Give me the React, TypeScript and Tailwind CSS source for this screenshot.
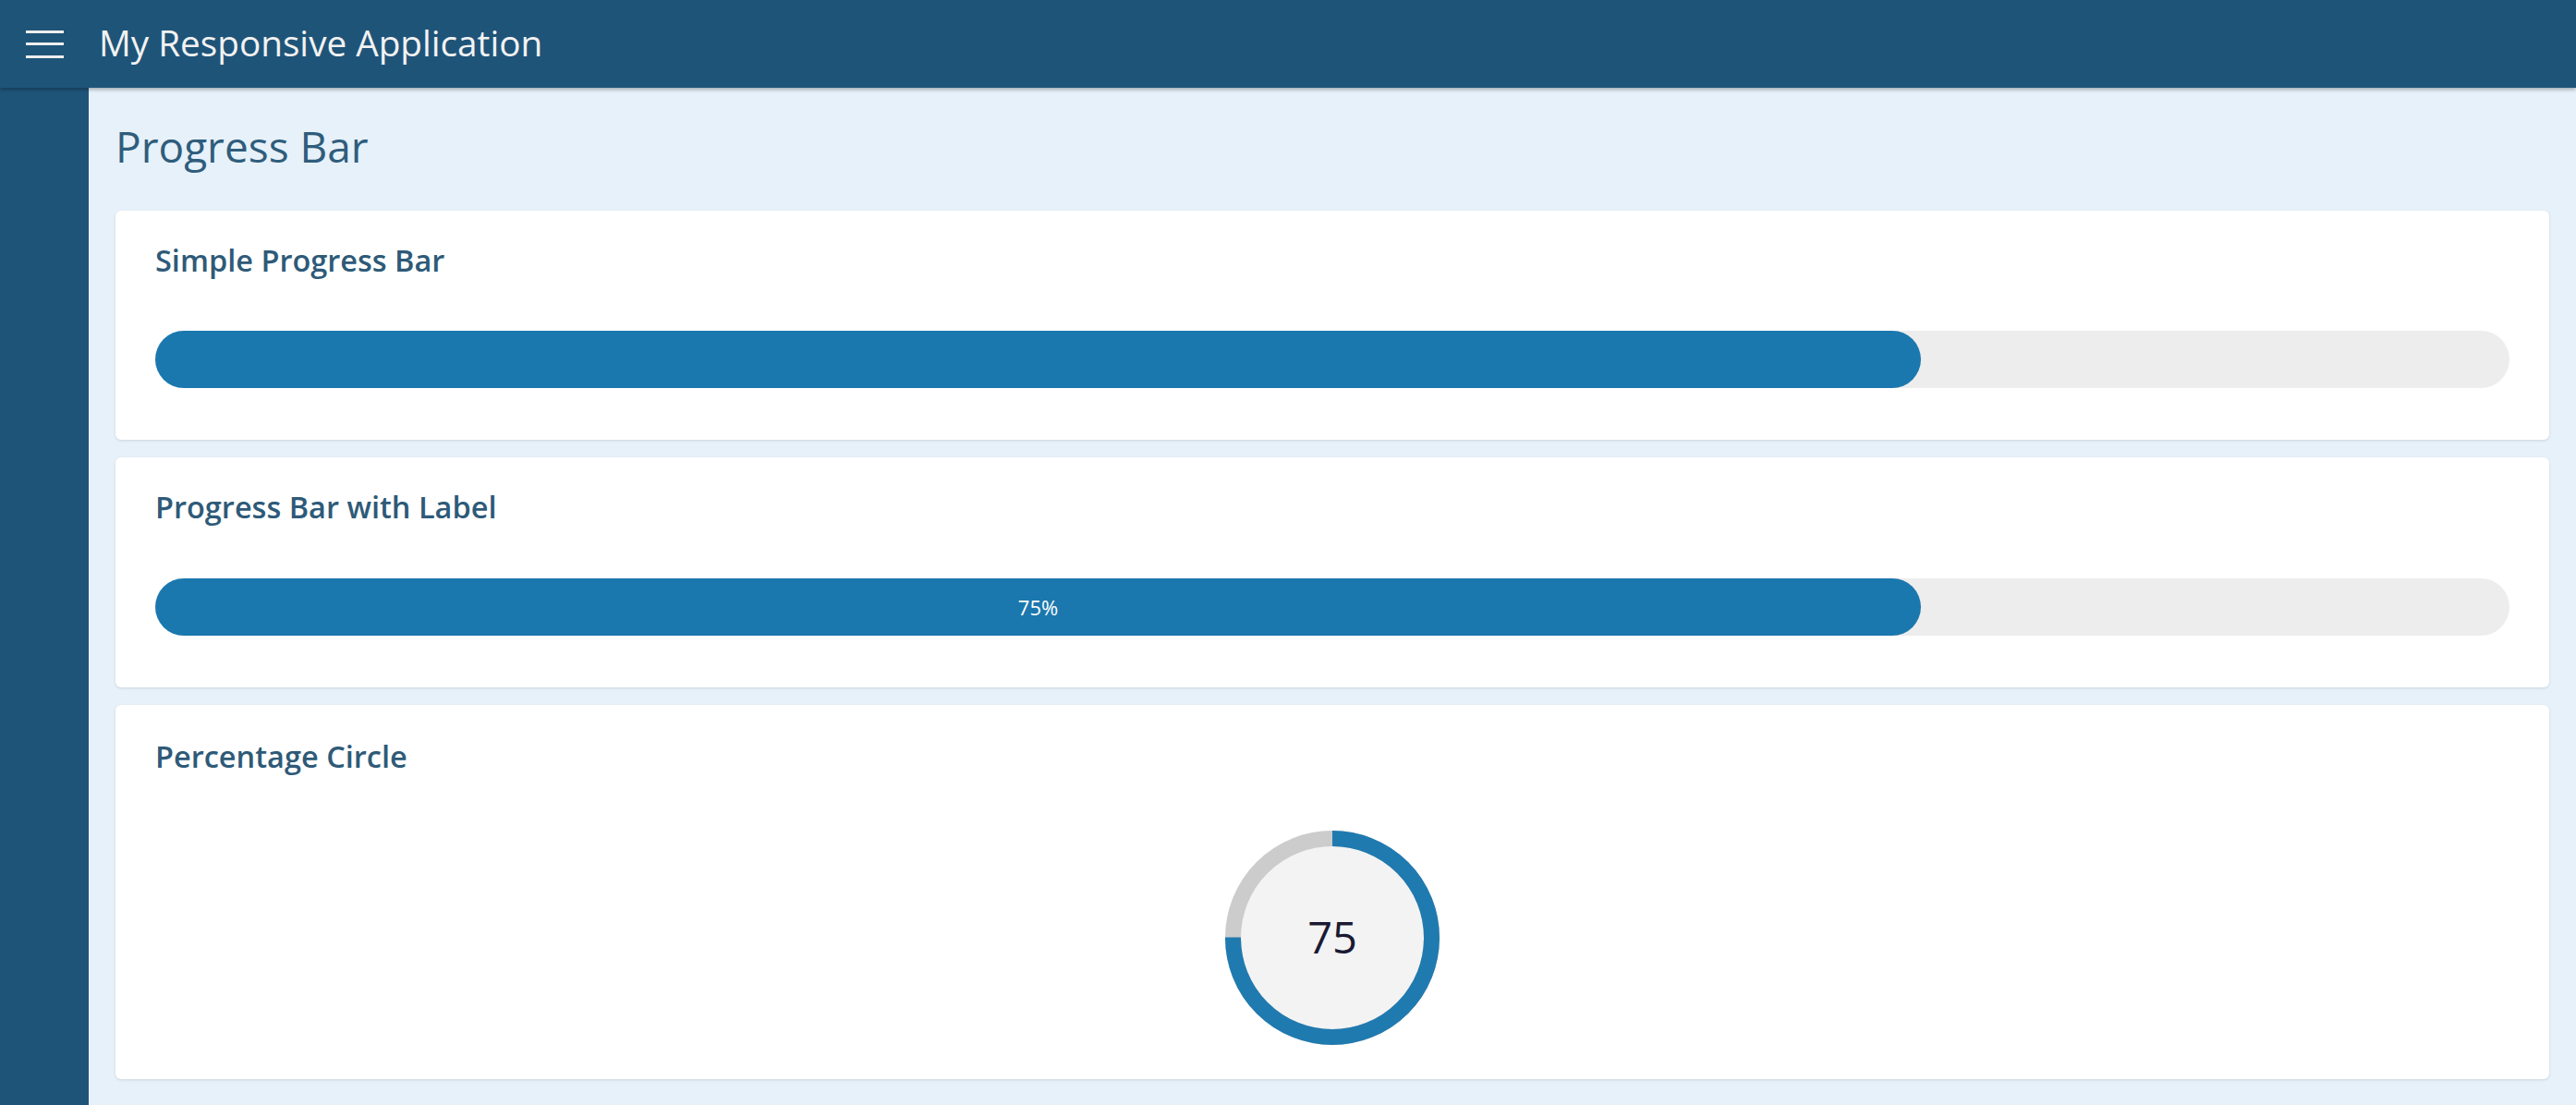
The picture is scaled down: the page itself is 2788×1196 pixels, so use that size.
const ProgressBar = ({ value, label }: { value: number; label?: boolean }) => (
  <div className="h-[62px] w-full rounded-full bg-[#ededed] flex">
    <div
      className="h-full rounded-full bg-[#1b78ae] flex items-center justify-center"
      style={{ width: `${value}%` }}
    >
      {label && <span className="text-[22px] text-white leading-none">{value}%</span>}
    </div>
  </div>
);

const PercentCircle = ({ value }: { value: number }) => {
  const r = 107.5;
  const c = 2 * Math.PI * r;
  return (
    <div className="relative w-[232px] h-[232px]">
      <svg width="232" height="232" viewBox="0 0 232 232">
        <circle cx="116" cy="116" r={r} fill="#f3f3f3" stroke="#cccccc" strokeWidth="17" />
        <circle
          cx="116"
          cy="116"
          r={r}
          fill="none"
          stroke="#1f7ab0"
          strokeWidth="17"
          strokeDasharray={`${(c * value) / 100} ${c}`}
          transform="rotate(-90 116 116)"
        />
      </svg>
      <div className="absolute inset-0 flex items-center justify-center text-[47px] text-[#1a1a33]">
        {value}
      </div>
    </div>
  );
};

const Card = ({ title, children, pad = "pt-[38px] pb-[38px]" }: { title: string; children: React.ReactNode; pad?: string }) => (
  <div className={`bg-white rounded-[6px] shadow-[0_1px_3px_rgba(0,0,0,0.12)] px-[43px] ${pad}`}>
    <h3 className="text-[32.5px] leading-none font-semibold text-[#2e5a78]">{title}</h3>
    {children}
  </div>
);

export default function App() {
  return (
    <div className="min-h-screen flex flex-col bg-[#e7f1fa] font-['Open_Sans',sans-serif]">
      {/* Top bar */}
      <header className="h-[95px] shrink-0 bg-[#1f5479] flex items-center pl-[28px] gap-[38px] shadow-[0_2px_4px_rgba(0,0,0,0.3)] relative z-10">
        <div className="w-[41px] h-[30px] flex flex-col justify-between">
          <span className="h-[3px] bg-[#eeeeee]" />
          <span className="h-[3px] bg-[#eeeeee]" />
          <span className="h-[3px] bg-[#eeeeee]" />
        </div>
        <h1 className="text-[38.7px] leading-none text-[#f2f2f2] -mt-[3px]">My Responsive Application</h1>
      </header>

      <div className="flex flex-1">
        <aside className="w-[96px] shrink-0 bg-[#1f5479]" />

        <main className="flex-1 px-[29px] pt-[40px] pb-[30px]">
          <h2 className="text-[46px] leading-none text-[#2f5d7c] mb-[47px]">Progress Bar</h2>

          <div className="flex flex-col gap-[19px]">
            <Card title="Simple Progress Bar">
              <div className="mt-[59px] mb-[18px]">
                <ProgressBar value={75} />
              </div>
            </Card>

            <Card title="Progress Bar with Label">
              <div className="mt-[61px] mb-[18px]">
                <ProgressBar value={75} label />
              </div>
            </Card>

            <Card title="Percentage Circle" pad="pt-[40px] pb-[37px]">
              <div className="mt-[63px] flex justify-center">
                <PercentCircle value={75} />
              </div>
            </Card>
          </div>
        </main>
      </div>
    </div>
  );
}
